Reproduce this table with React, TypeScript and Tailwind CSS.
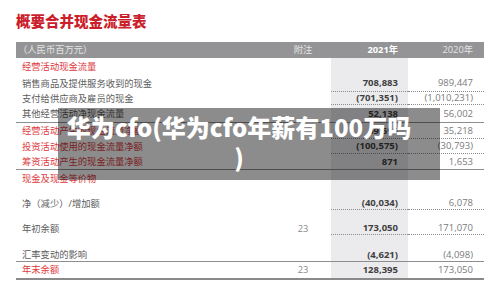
type Line = "none" | "dotted" | "solid" | "end";

type Row = {
  label: string;
  red?: boolean;
  note?: string;
  cur?: string;
  prev?: string;
  h: string;
  line: Line;
  bottom?: boolean;
};

const rows: Row[] = [
  { label: "经营活动现金流量", red: true, h: "h-[17px]", line: "none" },
  { label: "销售商品及提供服务收到的现金", cur: "708,883", prev: "989,447", h: "h-[17px]", line: "dotted" },
  { label: "支付给供应商及雇员的现金", cur: "(701,351)", prev: "(1,010,231)", h: "h-[13px]", line: "dotted" },
  { label: "其他经营活动净现金流量", cur: "52,138", prev: "56,002", h: "h-[18px]", line: "solid" },
  { label: "经营活动产生的现金流量净额", red: true, cur: "69,595", prev: "35,218", h: "h-[16px]", line: "dotted" },
  { label: "投资活动使用的现金流量净额", red: true, cur: "(100,575)", prev: "(30,793)", h: "h-[15px]", line: "dotted" },
  { label: "筹资活动产生的现金流量净额", red: true, cur: "871", prev: "1,653", h: "h-[16px]", line: "solid" },
  { label: "现金及现金等价物", red: true, h: "h-[17px]", line: "none" },
  { label: "净（减少）/增加额", cur: "(40,034)", prev: "6,078", h: "h-[23px]", line: "dotted", bottom: true },
  { label: "年初余额", note: "23", cur: "173,050", prev: "171,070", h: "h-[25px]", line: "dotted", bottom: true },
  { label: "汇率变动的影响", cur: "(4,621)", prev: "(4,098)", h: "h-[27px]", line: "solid", bottom: true },
  { label: "年末余额", red: true, note: "23", cur: "128,395", prev: "173,050", h: "h-[18px]", line: "end" },
];

function TableRow({ row }: { row: Row }) {
  const rowLine =
    row.line === "solid"
      ? "border-b border-[#8e8e8e]"
      : row.line === "end"
        ? "border-b-2 border-[#8a8a8a]"
        : "";
  const cellLine = row.line === "dotted" ? "border-b border-dotted border-[#8c8c8c]" : "";
  const align = row.bottom ? "items-end pb-[2px]" : "items-center";

  return (
    <div className={`flex ${row.h} ${rowLine}`}>
      <div
        className={`flex flex-1 ${align} pl-[6px] text-[9.3px] leading-none ${
          row.red ? "text-[#dd3a40]" : "text-[#5c5c5c]"
        }`}
      >
        {row.label}
      </div>
      <div className={`flex w-[56px] ${align} justify-center text-[9.3px] leading-none text-[#8a8a8a]`}>
        {row.note}
      </div>
      <div
        className={`flex w-[77px] ${align} justify-end bg-[#ebebee] pr-[10px] text-[9.5px] font-bold leading-none text-[#3f3f3f] ${cellLine}`}
      >
        {row.cur}
      </div>
      <div
        className={`flex w-[76px] ${align} justify-end pr-[11px] text-[9.5px] leading-none text-[#7a7a7a] ${cellLine}`}
      >
        {row.prev}
      </div>
    </div>
  );
}

export default function App() {
  return (
    <div
      className="relative h-[288px] w-[500px] overflow-hidden bg-white"
      style={{ fontFamily: '"Open Sans", "Noto Sans CJK SC", sans-serif' }}
    >
      <div
        className="flex h-[42px] items-center pl-[16px] text-[14.5px] font-black text-[#cc1f2d]"
        style={{ fontFamily: '"Noto Sans CJK SC", sans-serif' }}
      >
        概要合并现金流量表
      </div>

      <div className="mx-[16px]">
        <div className="flex h-[16px] bg-[#949496] text-[9.3px] leading-none">
          <div className="flex flex-1 items-center pl-[2px] text-[#e4e4e4]">（人民币百万元）</div>
          <div className="flex w-[56px] items-center justify-center text-[#e4e4e4]">附注</div>
          <div className="flex w-[77px] items-center justify-end pr-[10px] font-bold text-white">2021年</div>
          <div className="flex w-[76px] items-center justify-end pr-[11px] text-[#e4e4e4]">2020年</div>
        </div>
        {rows.map((row) => (
          <TableRow key={row.label} row={row} />
        ))}
      </div>

      <div className="absolute left-[58px] top-[108px] flex h-[72px] w-[382px] items-center bg-black/45 pb-[5px] pl-[8px] pr-[28px]">
        <p
          className="w-full text-center text-[24px] font-black leading-[30px] text-white"
          style={{ fontFamily: '"Noto Sans CJK SC", "Noto Sans", sans-serif' }}
        >
          华为cfo(华为cfo年薪有100万吗
          <br />)
        </p>
      </div>
    </div>
  );
}
